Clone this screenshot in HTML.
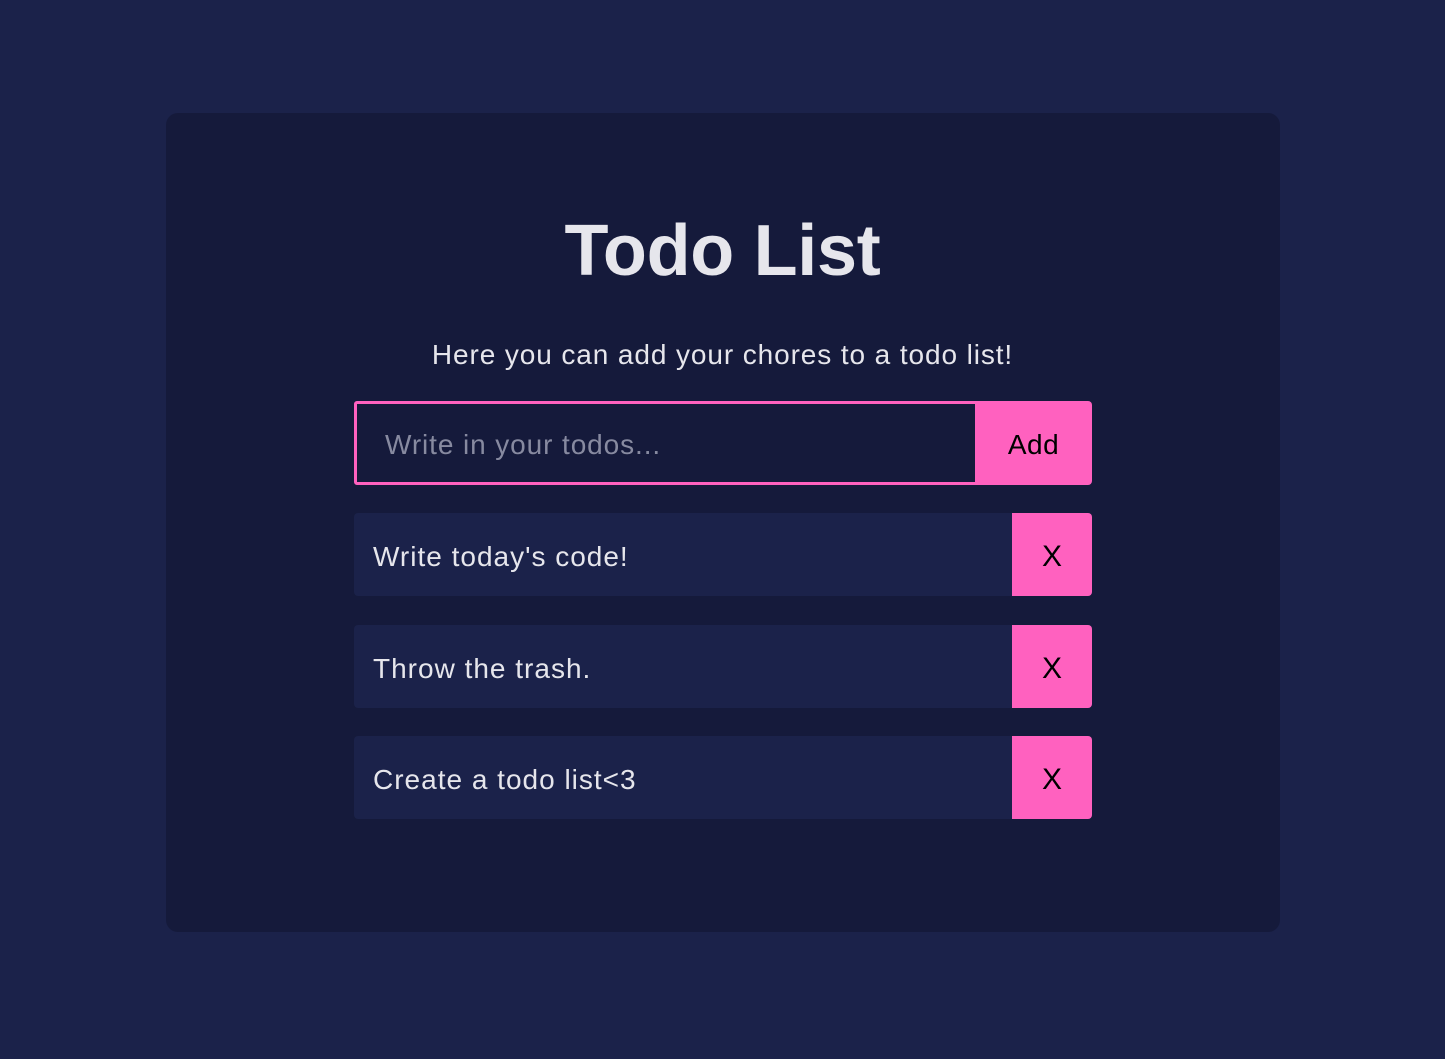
<!DOCTYPE html>
<html><head><meta charset="utf-8"><style>
*{box-sizing:border-box;margin:0;padding:0}
body{width:1445px;height:1059px;background:#1b224a;font-family:"Liberation Sans",sans-serif;position:relative;overflow:hidden}
.card{position:absolute;left:166px;top:113px;width:1114px;height:819px;background:#151a3b;border-radius:12px}
h1{position:absolute;left:0;right:0;top:210px;text-align:center;color:#e6e6ec;font-size:72px;font-weight:bold;letter-spacing:-0.3px}
.sub{position:absolute;left:0;right:0;top:339px;text-align:center;color:#e6e6ec;font-size:28px;letter-spacing:0.9px}
.inp{position:absolute;left:354px;top:401px;width:624px;height:84px;border:3px solid #ff61bf;border-radius:3px 0 0 3px;color:#878aa0;font-size:28px;padding-left:28px;line-height:82px;letter-spacing:0.9px}
.add{position:absolute;left:975px;top:401px;width:117px;height:84px;background:#ff61bf;border-radius:0 4px 4px 0;color:#000;font-size:28px;text-align:center;line-height:88px;letter-spacing:0.5px}
.item{position:absolute;left:354px;width:738px;height:83px;background:#1b224a;border-radius:4px;color:#e6e6ec;font-size:28px;line-height:87px;padding-left:19px;letter-spacing:1px}
.x{position:absolute;right:0;top:0;width:80px;height:83px;background:#ff61bf;border-radius:0 4px 4px 0;color:#000;text-align:center;font-size:30px;letter-spacing:0}
</style></head><body>
<div class="card"></div>
<h1>Todo List</h1>
<div class="sub">Here you can add your chores to a todo list!</div>
<div class="inp">Write in your todos...</div>
<div class="add">Add</div>
<div class="item" style="top:513px">Write today's code!<div class="x">X</div></div>
<div class="item" style="top:625px">Throw the trash.<div class="x">X</div></div>
<div class="item" style="top:736px">Create a todo list&lt;3<div class="x">X</div></div>
</body></html>
